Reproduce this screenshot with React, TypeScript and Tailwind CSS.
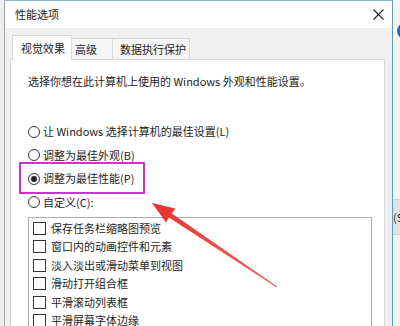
import React from "react";

const font = "font-['Noto_Sans_CJK_SC','Noto_Sans',sans-serif]";

function Radio({ label, checked }: { label: string; checked?: boolean }) {
  return (
    <div className="h-[23.5px] flex items-center gap-[3px]">
      <span className="w-[12px] h-[12px] rounded-full border border-[#333] bg-white flex items-center justify-center shrink-0">
        {checked && <span className="w-[6px] h-[6px] rounded-full bg-[#222]" />}
      </span>
      <span>{label}</span>
    </div>
  );
}

function Check({ label }: { label: string }) {
  return (
    <div className="h-[18.5px] flex items-center gap-[5px] shrink-0">
      <span className="w-[13px] h-[13px] border border-[#333] bg-white shrink-0" />
      <span>{label}</span>
    </div>
  );
}

export default function App() {
  return (
    <div
      className={`relative w-[400px] h-[326px] overflow-hidden bg-[#f2f2f2] flex text-[11px] leading-[15px] text-[#1e1e1e] ${font}`}
    >
      <div className="w-[4px] shrink-0 bg-[#eeeeee]" />
      <div className="w-[389px] shrink-0 h-full flex flex-col border-l border-r border-t border-l-[#9aa3ab] border-r-[#5f9cbf] border-t-[#8fb3c9]">
        <div className="h-[27px] bg-white flex items-center justify-between pl-[10px] pr-[8px] shrink-0">
          <span>性能选项</span>
          <svg width="11" height="11" viewBox="0 0 11 11">
            <path d="M0.5 0.5 L10.5 10.5 M10.5 0.5 L0.5 10.5" stroke="#222" strokeWidth="1.1" />
          </svg>
        </div>
        <div className="flex-1 bg-[#f0f0f0] pl-[5px] pr-[7px] pt-[7px] flex flex-col">
          <div className="flex items-end h-[24px] pl-[2px] relative z-10">
            <div className="w-[60px] h-[25px] -mb-px bg-white border border-b-0 border-[#d9d9d9] flex items-center pl-[8px]">
              视觉效果
            </div>
            <div className="w-[41px] h-[21px] bg-[#f5f5f5] border-r border-t border-[#d9d9d9] flex items-center pl-[3px]">
              高级
            </div>
            <div className="w-[77px] h-[21px] bg-[#f5f5f5] border-r border-t border-[#d9d9d9] flex items-center pl-[7px]">
              数据执行保护
            </div>
          </div>
          <div className="flex-1 bg-white border border-[#d9d9d9] pl-[17px] pt-[14px] flex flex-col">
            <div>选择你想在此计算机上使用的 Windows 外观和性能设置。</div>
            <div className="mt-[31px]">
              <Radio label="让 Windows 选择计算机的最佳设置(L)" />
              <Radio label="调整为最佳外观(B)" />
              <Radio label="调整为最佳性能(P)" checked />
              <Radio label="自定义(C):" />
            </div>
            <div className="mt-[3px] w-[344px] h-[140px] border border-[#acacac] pl-[4px] pt-px flex flex-col">
              <Check label="保存任务栏缩略图预览" />
              <Check label="窗口内的动画控件和元素" />
              <Check label="淡入淡出或滑动菜单到视图" />
              <Check label="滑动打开组合框" />
              <Check label="平滑滚动列表框" />
              <Check label="平滑屏幕字体边缘" />
            </div>
          </div>
        </div>
      </div>
      <div className="flex-1 flex flex-col bg-[#f4f4f4] overflow-hidden">
        <div className="h-[23px]" />
        <div className="h-[16px] w-[16px] ml-[4px] rounded-full bg-[#1f6fb5]" />
        <div className="h-[160px]" />
        <div className="h-[36px] bg-[#e3e3e3] border-y border-[#d0d0d0] flex items-center text-[11px] whitespace-nowrap">
          (S
        </div>
      </div>

      <div className="absolute left-[19px] top-[162px] w-[126px] h-[32px] border-2 border-[#cf30cf] pointer-events-none" />

      <svg className="absolute left-0 top-0 pointer-events-none" width="400" height="326" viewBox="0 0 400 326">
        <defs>
          <linearGradient id="ag" x1="277" y1="287" x2="152" y2="203" gradientUnits="userSpaceOnUse">
            <stop offset="0" stopColor="#e86a6a" />
            <stop offset="1" stopColor="#e8322f" />
          </linearGradient>
        </defs>
        <polygon
          points="152,203 175.5,208.5 171.9,213.4 277.3,286.6 276.7,287.4 168.9,217.6 166,222.5"
          fill="url(#ag)"
        />
      </svg>
    </div>
  );
}
